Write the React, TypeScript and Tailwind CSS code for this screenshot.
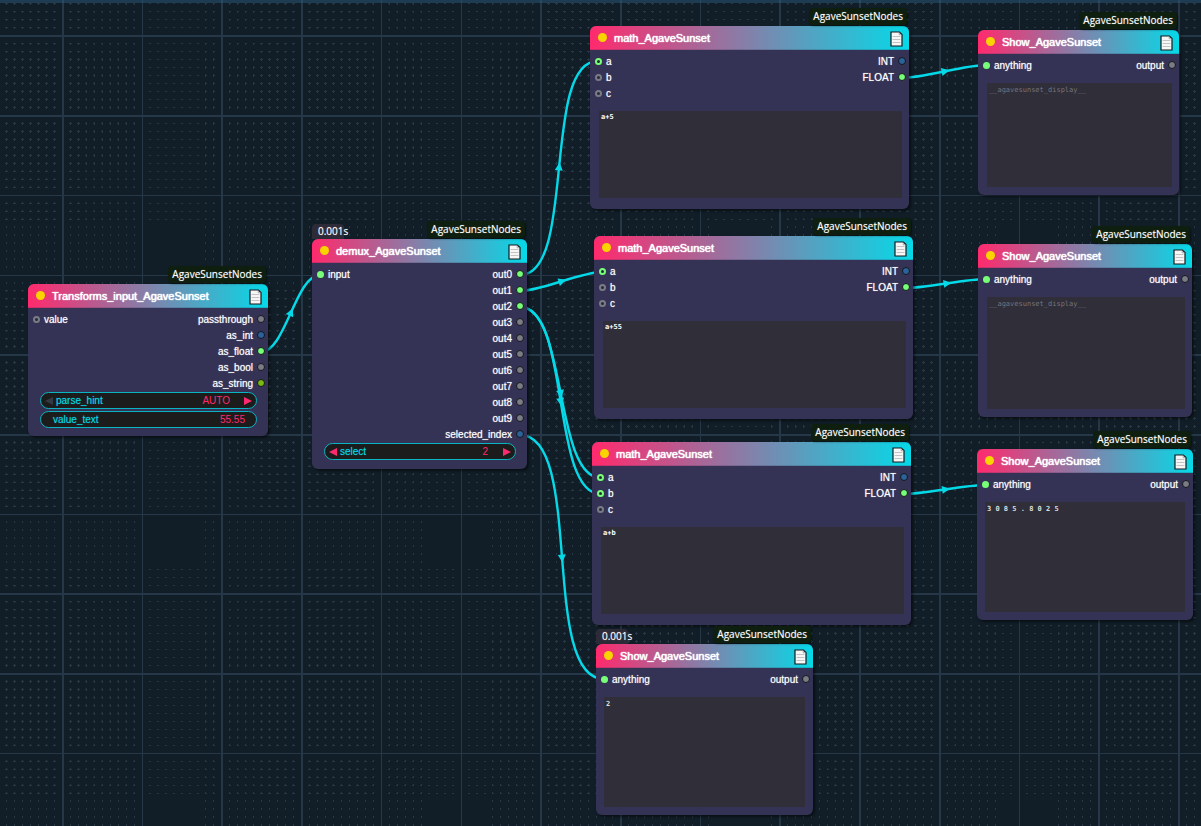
import React, { useMemo } from "react";

type Tone = "green" | "gray" | "blue" | "olive";
type Slot = { label: string; tone: Tone; ring?: boolean };
type Widget = { label: string; value: string; kind: "combo" | "number" | "text" };
type NodeData = {
  id: string;
  title: string;
  box: string;
  time?: string;
  inputs: Slot[];
  outputs: Slot[];
  widgets?: Widget[];
  text?: { value: string; placeholder?: string; style: string };
};

const FILL: Record<Tone, string> = {
  green: "bg-[#77ff77]",
  gray: "bg-[#7b7b85]",
  blue: "bg-[#2a6299]",
  olive: "bg-[#77bb11]",
};
const RING: Record<Tone, string> = {
  green: "border-[#77ff77]",
  gray: "border-[#7b7b85]",
  blue: "border-[#2a6299]",
  olive: "border-[#77bb11]",
};

const MATH_IN = (a: Tone, b: Tone): Slot[] => [
  { label: "a", tone: a, ring: true },
  { label: "b", tone: b, ring: true },
  { label: "c", tone: "gray", ring: true },
];
const MATH_OUT: Slot[] = [
  { label: "INT", tone: "blue" },
  { label: "FLOAT", tone: "green" },
];
const SHOW_IN: Slot[] = [{ label: "anything", tone: "green" }];
const SHOW_OUT: Slot[] = [{ label: "output", tone: "gray" }];
const MATH_TEXT = "mb-[11px] ml-[9px] mr-[7px] leading-[9px] font-bold text-white";
const SHOW_TEXT = "mb-2 mx-2 leading-[10px] font-bold text-[#dddddd]";
const EMPTY_TEXT = "mb-2 ml-[9px] mr-[7px] leading-[10px] text-[#dddddd]";

const NODES: NodeData[] = [
  {
    id: "transforms",
    title: "Transforms_input_AgaveSunset",
    box: "left-[28px] top-[284px] w-[240px] h-[152px]",
    inputs: [{ label: "value", tone: "gray", ring: true }],
    outputs: [
      { label: "passthrough", tone: "gray" },
      { label: "as_int", tone: "blue" },
      { label: "as_float", tone: "green" },
      { label: "as_bool", tone: "gray" },
      { label: "as_string", tone: "olive" },
    ],
    widgets: [
      { label: "parse_hint", value: "AUTO", kind: "combo" },
      { label: "value_text", value: "55.55", kind: "text" },
    ],
  },
  {
    id: "demux",
    title: "demux_AgaveSunset",
    box: "left-[312px] top-[239px] w-[215px] h-[230px]",
    time: "0.001s",
    inputs: [{ label: "input", tone: "green" }],
    outputs: [
      ...[0, 1, 2, 3, 4, 5, 6, 7, 8, 9].map(
        (i): Slot => ({ label: `out${i}`, tone: i < 3 ? "green" : "gray" })
      ),
      { label: "selected_index", tone: "blue" },
    ],
    widgets: [{ label: "select", value: "2", kind: "number" }],
  },
  {
    id: "math-1",
    title: "math_AgaveSunset",
    box: "left-[590px] top-[26px] w-[319px] h-[183px]",
    inputs: MATH_IN("green", "gray"),
    outputs: MATH_OUT,
    text: { value: "a+5", style: MATH_TEXT },
  },
  {
    id: "math-2",
    title: "math_AgaveSunset",
    box: "left-[594px] top-[236px] w-[319px] h-[183px]",
    inputs: MATH_IN("green", "gray"),
    outputs: MATH_OUT,
    text: { value: "a+55", style: MATH_TEXT },
  },
  {
    id: "math-3",
    title: "math_AgaveSunset",
    box: "left-[592px] top-[442px] w-[319px] h-[183px]",
    inputs: MATH_IN("green", "green"),
    outputs: MATH_OUT,
    text: { value: "a+b", style: MATH_TEXT },
  },
  {
    id: "show-1",
    title: "Show_AgaveSunset",
    box: "left-[978px] top-[30px] w-[201px] h-[165px]",
    inputs: SHOW_IN,
    outputs: SHOW_OUT,
    text: { value: "", placeholder: "__agavesunset_display__", style: EMPTY_TEXT },
  },
  {
    id: "show-2",
    title: "Show_AgaveSunset",
    box: "left-[978px] top-[244px] w-[214px] h-[173px]",
    inputs: SHOW_IN,
    outputs: SHOW_OUT,
    text: { value: "", placeholder: "__agavesunset_display__", style: EMPTY_TEXT },
  },
  {
    id: "show-3",
    title: "Show_AgaveSunset",
    box: "left-[977px] top-[449px] w-[216px] h-[171px]",
    inputs: SHOW_IN,
    outputs: SHOW_OUT,
    text: { value: "3 0 8 5 . 8 0 2 5", style: SHOW_TEXT },
  },
  {
    id: "show-4",
    title: "Show_AgaveSunset",
    box: "left-[596px] top-[644px] w-[217px] h-[171px]",
    time: "0.001s",
    inputs: SHOW_IN,
    outputs: SHOW_OUT,
    text: { value: "2", style: SHOW_TEXT },
  },
];

const LINKS: [number, number, number, number][] = [
  [261, 352, 320, 275],
  [520, 275, 598, 61],
  [520, 291, 602, 272],
  [520, 307, 601, 478],
  [520, 307, 601, 494],
  [520, 435, 604, 679],
  [902, 78, 986, 65],
  [906, 288, 986, 279],
  [904, 494, 985, 485],
];

/* Grid texture: 100-unit cells with a small plus every 10 units, sampled at the zoom level. */
const STEP = 1.254375;
type Mark = { arm: number[]; mid: number | null };

function sampleAxis(size: number, origin: number, phase: number) {
  const lines: number[] = [];
  const marks = new Map<number, Mark>();
  for (let p = 0; p < size; p++) {
    const s = Math.floor(phase + (p - origin) * STEP);
    const cell = ((s % 100) + 100) % 100;
    if (cell < 2) {
      lines.push(p);
      continue;
    }
    const k = Math.round(s / 10);
    const d = s - k * 10;
    if (Math.abs(d) > 1 || k % 10 === 0) continue;
    const m = marks.get(k) ?? { arm: [], mid: null };
    m.arm.push(p);
    if (d === 0) m.mid = p;
    marks.set(k, m);
  }
  return { lines, marks: [...marks.values()] };
}

function Grid() {
  const { linePath, markPath } = useMemo(() => {
    const w = 1920;
    const h = 1080;
    const xs = sampleAxis(w, 62, 0.65);
    const ys = sampleAxis(h, 35, 0.165);
    let linePath = "";
    xs.lines.forEach((x) => (linePath += `M${x} 0h1v${h}h-1z`));
    ys.lines.forEach((y) => (linePath += `M0 ${y}h${w}v1h-${w}z`));
    let markPath = "";
    for (const cx of xs.marks) {
      for (const cy of ys.marks) {
        if (cy.mid !== null)
          markPath += `M${cx.arm[0]} ${cy.mid}h${cx.arm.length}v1h-${cx.arm.length}z`;
        if (cx.mid !== null)
          markPath += `M${cx.mid} ${cy.arm[0]}h1v${cy.arm.length}h-1z`;
      }
    }
    return { linePath, markPath };
  }, []);
  return (
    <svg className="absolute left-0 top-0" width="1920" height="1080" shapeRendering="crispEdges" aria-hidden="true">
      <path d={markPath} fill="#273744" />
      <path d={linePath} fill="#263848" />
    </svg>
  );
}

function Links() {
  return (
    <svg className="absolute left-0 top-0" width="1920" height="1080" aria-hidden="true">
      {LINKS.map(([x1, y1, x2, y2], i) => {
        const c = Math.hypot(x2 - x1, y2 - y1) / 4;
        const dx = 0.75 * (x2 - x1 + (x2 - c) - (x1 + c));
        const dy = 0.75 * 2 * (y2 - y1);
        const angle = (Math.atan2(dy, dx) * 180) / Math.PI;
        return (
          <g key={i}>
            <path
              d={`M${x1} ${y1}C${x1 + c} ${y1} ${x2 - c} ${y2} ${x2} ${y2}`}
              fill="none"
              stroke="#05d9e8"
              strokeWidth="2.4"
            />
            <path
              d="M-2.4-4L5.6 0L-2.4 4Z"
              fill="#05d9e8"
              transform={`translate(${(x1 + x2) / 2} ${(y1 + y2) / 2}) rotate(${angle})`}
            />
          </g>
        );
      })}
    </svg>
  );
}

function DocIcon() {
  return (
    <svg width="13" height="16" viewBox="0 0 13 16" aria-hidden="true">
      <path d="M1 1H9.4L12 3.6V15H1Z" fill="#f6f6f6" stroke="#15191c" strokeWidth="1.2" />
      <path d="M9.2 1.4V3.8H11.6" fill="none" stroke="#8d9094" strokeWidth=".7" />
      <path d="M2.6 5.5H10.4M2.6 8.5H10.4M2.6 11.5H10.4" stroke="#c4c4c4" strokeWidth="1.2" />
    </svg>
  );
}

function Dot({ slot, out }: { slot: Slot; out?: boolean }) {
  if (slot.ring)
    return <span className={`size-[7px] shrink-0 rounded-full border-2 bg-[#262a3c] ${RING[slot.tone]}`} />;
  return (
    <span
      className={`shrink-0 rounded-full ${FILL[slot.tone]} ${out ? "size-2 border border-[#14171c]" : "size-[7px]"}`}
    />
  );
}

function WidgetRow({ w, id }: { w: Widget; id: string }) {
  const field = "min-w-0 appearance-none bg-transparent p-0 text-right text-[10px] leading-3 text-[#ff2a6d] outline-none";
  const stepper = w.kind !== "text";
  return (
    <div className="flex h-[17px] items-center rounded-full border border-[#0bb4c2] bg-[#1c1c1c] px-1 text-[10px] leading-3">
      {stepper && (
        <button
          type="button"
          aria-label={`Previous ${w.label}`}
          className={w.kind === "combo" ? "text-[#333b42]" : "text-[#ff2a6d]"}
        >
          <svg width="8" height="8" viewBox="0 0 8 8">
            <path d="M8 0V8L0 4Z" fill="currentColor" />
          </svg>
        </button>
      )}
      <label
        htmlFor={id}
        className={`text-[#05d9e8] [text-shadow:0_0_1px_#05d9e880] ${stepper ? "ml-[3px]" : "ml-2"}`}
      >
        {w.label}
      </label>
      {w.kind === "combo" ? (
        <select id={id} defaultValue={w.value} className={`${field} ml-auto mr-[14px] [text-align-last:right]`}>
          <option>{w.value}</option>
        </select>
      ) : (
        <input
          id={id}
          type="text"
          defaultValue={w.value}
          className={`${field} flex-1 ${w.kind === "number" ? "mr-[15px]" : "mr-[7px]"}`}
        />
      )}
      {stepper && (
        <button type="button" aria-label={`Next ${w.label}`} className="text-[#ff2a6d]">
          <svg width="8" height="8" viewBox="0 0 8 8">
            <path d="M0 0V8L8 4Z" fill="currentColor" />
          </svg>
        </button>
      )}
    </div>
  );
}

function SlotLabel({ children }: { children: string }) {
  return <span className="pt-[2px] leading-[14px] [text-shadow:0_0_1px_#ffffffb0]">{children}</span>;
}

function GraphNode({ node }: { node: NodeData }) {
  return (
    <section
      className={`absolute flex flex-col rounded-md bg-[#353355] shadow-[2px_2px_3px_rgba(0,0,0,0.5)] ${node.box}`}
    >
      {node.time && (
        <span className="absolute -top-[15px] left-0 h-[15px] w-8 rounded-t-sm bg-[#2d2b38] pl-[6px] font-['Open_Sans',sans-serif] text-[10px] leading-[15px] whitespace-nowrap text-white [text-shadow:0_0_1px_#ffffff80]">
          {node.time}
        </span>
      )}
      <span className="absolute -top-[18px] right-[2px] h-[17px] rounded bg-[#0f1f0f] px-1 font-['Open_Sans',sans-serif] text-[10px] leading-4 whitespace-nowrap text-white shadow-[1px_1px_2px_rgba(0,0,0,0.5)] [text-shadow:0_0_1px_#ffffff80]">
        AgaveSunsetNodes
      </span>
      <header className="flex h-6 shrink-0 items-center rounded-t-md border-b border-[#2b2a4633] bg-linear-to-r/srgb from-[#ff2a6d] to-[#05d9e8] pr-[6px] pl-2">
        <span className="size-[9px] rounded-full bg-[#f9d400]" />
        <h2 className="ml-[7px] flex-1 text-[11px] leading-4 whitespace-nowrap text-white [text-shadow:0_0_1px_#ffffff,0_0_1px_#ffffff]">
          {node.title}
        </h2>
        <span className="pt-[3px]">
          <DocIcon />
        </span>
      </header>
      <div className="flex justify-between pt-[3px] pr-[3px] pl-[5px] text-[10px] text-white">
        <ul>
          {node.inputs.map((s) => (
            <li key={s.label} className="flex h-4 items-center gap-1">
              <Dot slot={s} />
              <SlotLabel>{s.label}</SlotLabel>
            </li>
          ))}
        </ul>
        <ul>
          {node.outputs.map((s) => (
            <li key={s.label} className="flex h-4 items-center justify-end gap-1">
              <SlotLabel>{s.label}</SlotLabel>
              <Dot slot={s} out />
            </li>
          ))}
        </ul>
      </div>
      {node.widgets && (
        <div className="mt-[1px] flex flex-col gap-[2px] pr-[11px] pl-3">
          {node.widgets.map((w) => (
            <WidgetRow key={w.label} w={w} id={`${node.id}-${w.label}`} />
          ))}
        </div>
      )}
      {node.text && (
        <textarea
          aria-label={node.title}
          defaultValue={node.text.value}
          placeholder={node.text.placeholder}
          spellCheck={false}
          className={`mt-[10px] min-h-0 flex-1 resize-none overflow-hidden bg-[#2f2e39] p-[2px] font-['DejaVu_Sans_Mono',monospace] text-[7px] outline-none placeholder:text-[#75757d] ${node.text.style}`}
        />
      )}
    </section>
  );
}

export default function App() {
  return (
    <main className="relative h-screen w-full overflow-hidden bg-[#111e28] font-['Liberation_Sans',Arial,sans-serif]">
      <Grid />
      <div className="relative h-[3px] bg-[#2a5a7c80]" />
      <Links />
      {NODES.map((n) => (
        <GraphNode key={n.id} node={n} />
      ))}
    </main>
  );
}
